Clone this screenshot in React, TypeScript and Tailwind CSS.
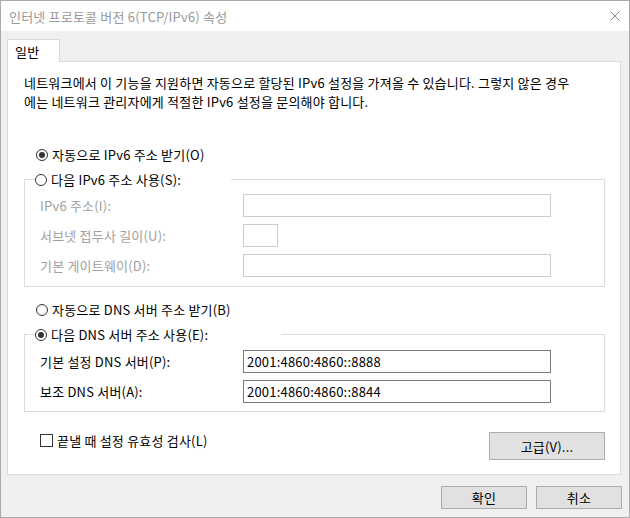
import React from "react";

function Radio({ checked }: { checked?: boolean }) {
  return (
    <span className="w-[12px] h-[12px] rounded-full border border-[#333333] bg-white flex items-center justify-center shrink-0">
      {checked && <span className="w-[6px] h-[6px] rounded-full bg-[#333333]" />}
    </span>
  );
}

function Field({ label, value, width, disabled }: { label: string; value?: string; width: string; disabled?: boolean }) {
  return (
    <div className="flex items-center h-[23px]">
      <div className={"w-[203px] shrink-0 " + (disabled ? "text-[#a0a0a0]" : "text-black")}>{label}</div>
      <div
        className={
          "h-[23px] bg-white border flex items-center pl-[3px] " +
          width +
          " " +
          (disabled ? "border-[#cccccc]" : "border-[#7a7a7a]")
        }
      >
        {value}
      </div>
    </div>
  );
}

export default function App() {
  return (
    <div className="w-[630px] h-[518px] border border-[#aaaaaa] bg-[#f0f0f0] flex flex-col text-[13px] tracking-[0.2px] leading-[17px] text-black font-['Noto_Sans_CJK_KR','Noto_Sans',sans-serif] overflow-hidden">
      {/* Title bar */}
      <div className="h-[30px] bg-white flex items-center justify-between pl-[8px] pr-[9px] shrink-0">
        <span className="text-[#999999]">인터넷 프로토콜 버전 6(TCP/IPv6) 속성</span>
        <svg width="10" height="10" viewBox="0 0 10 10">
          <path d="M0.5 0.5L9.5 9.5M9.5 0.5L0.5 9.5" stroke="#8a8a8a" strokeWidth="1" />
        </svg>
      </div>

      {/* Tabs + panel */}
      <div className="pl-[6px] pt-[8px] flex flex-col shrink-0">
        <div className="flex">
          <div className="h-[23px] w-[53px] bg-white border border-b-0 border-[#d9d9d9] -mb-px relative z-10 pl-[7px] flex items-center">
            일반
          </div>
        </div>
        <div className="w-[614px] h-[414px] bg-white border border-[#d9d9d9] flex flex-col">
          <div className="pt-[11px] pl-[16px] flex flex-col leading-[19px]">
            <div>네트워크에서 이 기능을 지원하면 자동으로 할당된 IPv6 설정을 가져올 수 있습니다. 그렇지 않은 경우</div>
            <div>에는 네트워크 관리자에게 적절한 IPv6 설정을 문의해야 합니다.</div>
          </div>

          <div className="mt-[35px] pl-[28px] h-[17px] flex items-center gap-[4px]">
            <Radio checked />
            <span>자동으로 IPv6 주소 받기(O)</span>
          </div>

          <fieldset className="mt-[8px] ml-[16px] w-[581px] border border-[#dcdcdc] pb-[9px]">
            <legend className="ml-[10px] w-[196px] h-[17px]">
              <div className="flex items-center gap-[4px] h-[17px]">
                <Radio />
                <span>다음 IPv6 주소 사용(S):</span>
              </div>
            </legend>
            <div className="pt-[6px] pl-[15px] flex flex-col gap-[7px]">
              <Field label="IPv6 주소(I):" width="w-[308px]" disabled />
              <Field label="서브넷 접두사 길이(U):" width="w-[35px]" disabled />
              <Field label="기본 게이트웨이(D):" width="w-[308px]" disabled />
            </div>
          </fieldset>

          <div className="mt-[14px] pl-[28px] h-[17px] flex items-center gap-[4px]">
            <Radio />
            <span>자동으로 DNS 서버 주소 받기(B)</span>
          </div>

          <fieldset className="mt-[8px] ml-[16px] w-[581px] border border-[#dcdcdc] pb-[8px]">
            <legend className="ml-[10px] w-[246px] h-[17px]">
              <div className="flex items-center gap-[4px] h-[17px]">
                <Radio checked />
                <span>다음 DNS 서버 주소 사용(E):</span>
              </div>
            </legend>
            <div className="pt-[7px] pl-[15px] flex flex-col gap-[7px]">
              <Field label="기본 설정 DNS 서버(P):" value="2001:4860:4860::8888" width="w-[308px]" />
              <Field label="보조 DNS 서버(A):" value="2001:4860:4860::8844" width="w-[308px]" />
            </div>
          </fieldset>

          <div className="mt-[20px] pl-[32px] pr-[15px] flex justify-between items-start">
            <div className="flex items-center gap-[4px] h-[17px]">
              <span className="w-[13px] h-[13px] border border-[#333333] bg-white shrink-0" />
              <span>끝낼 때 설정 유효성 검사(L)</span>
            </div>
            <div className="w-[116px] h-[28px] bg-[#e1e1e1] border border-[#adadad] flex items-center justify-center">
              고급(V)...
            </div>
          </div>
        </div>
      </div>

      {/* Bottom buttons */}
      <div className="flex justify-end gap-[9px] pr-[7px] pt-[11px]">
        <div className="w-[86px] h-[23px] bg-[#e1e1e1] border border-[#adadad] flex items-center justify-center">확인</div>
        <div className="w-[86px] h-[23px] bg-[#e1e1e1] border border-[#adadad] flex items-center justify-center">취소</div>
      </div>
    </div>
  );
}
